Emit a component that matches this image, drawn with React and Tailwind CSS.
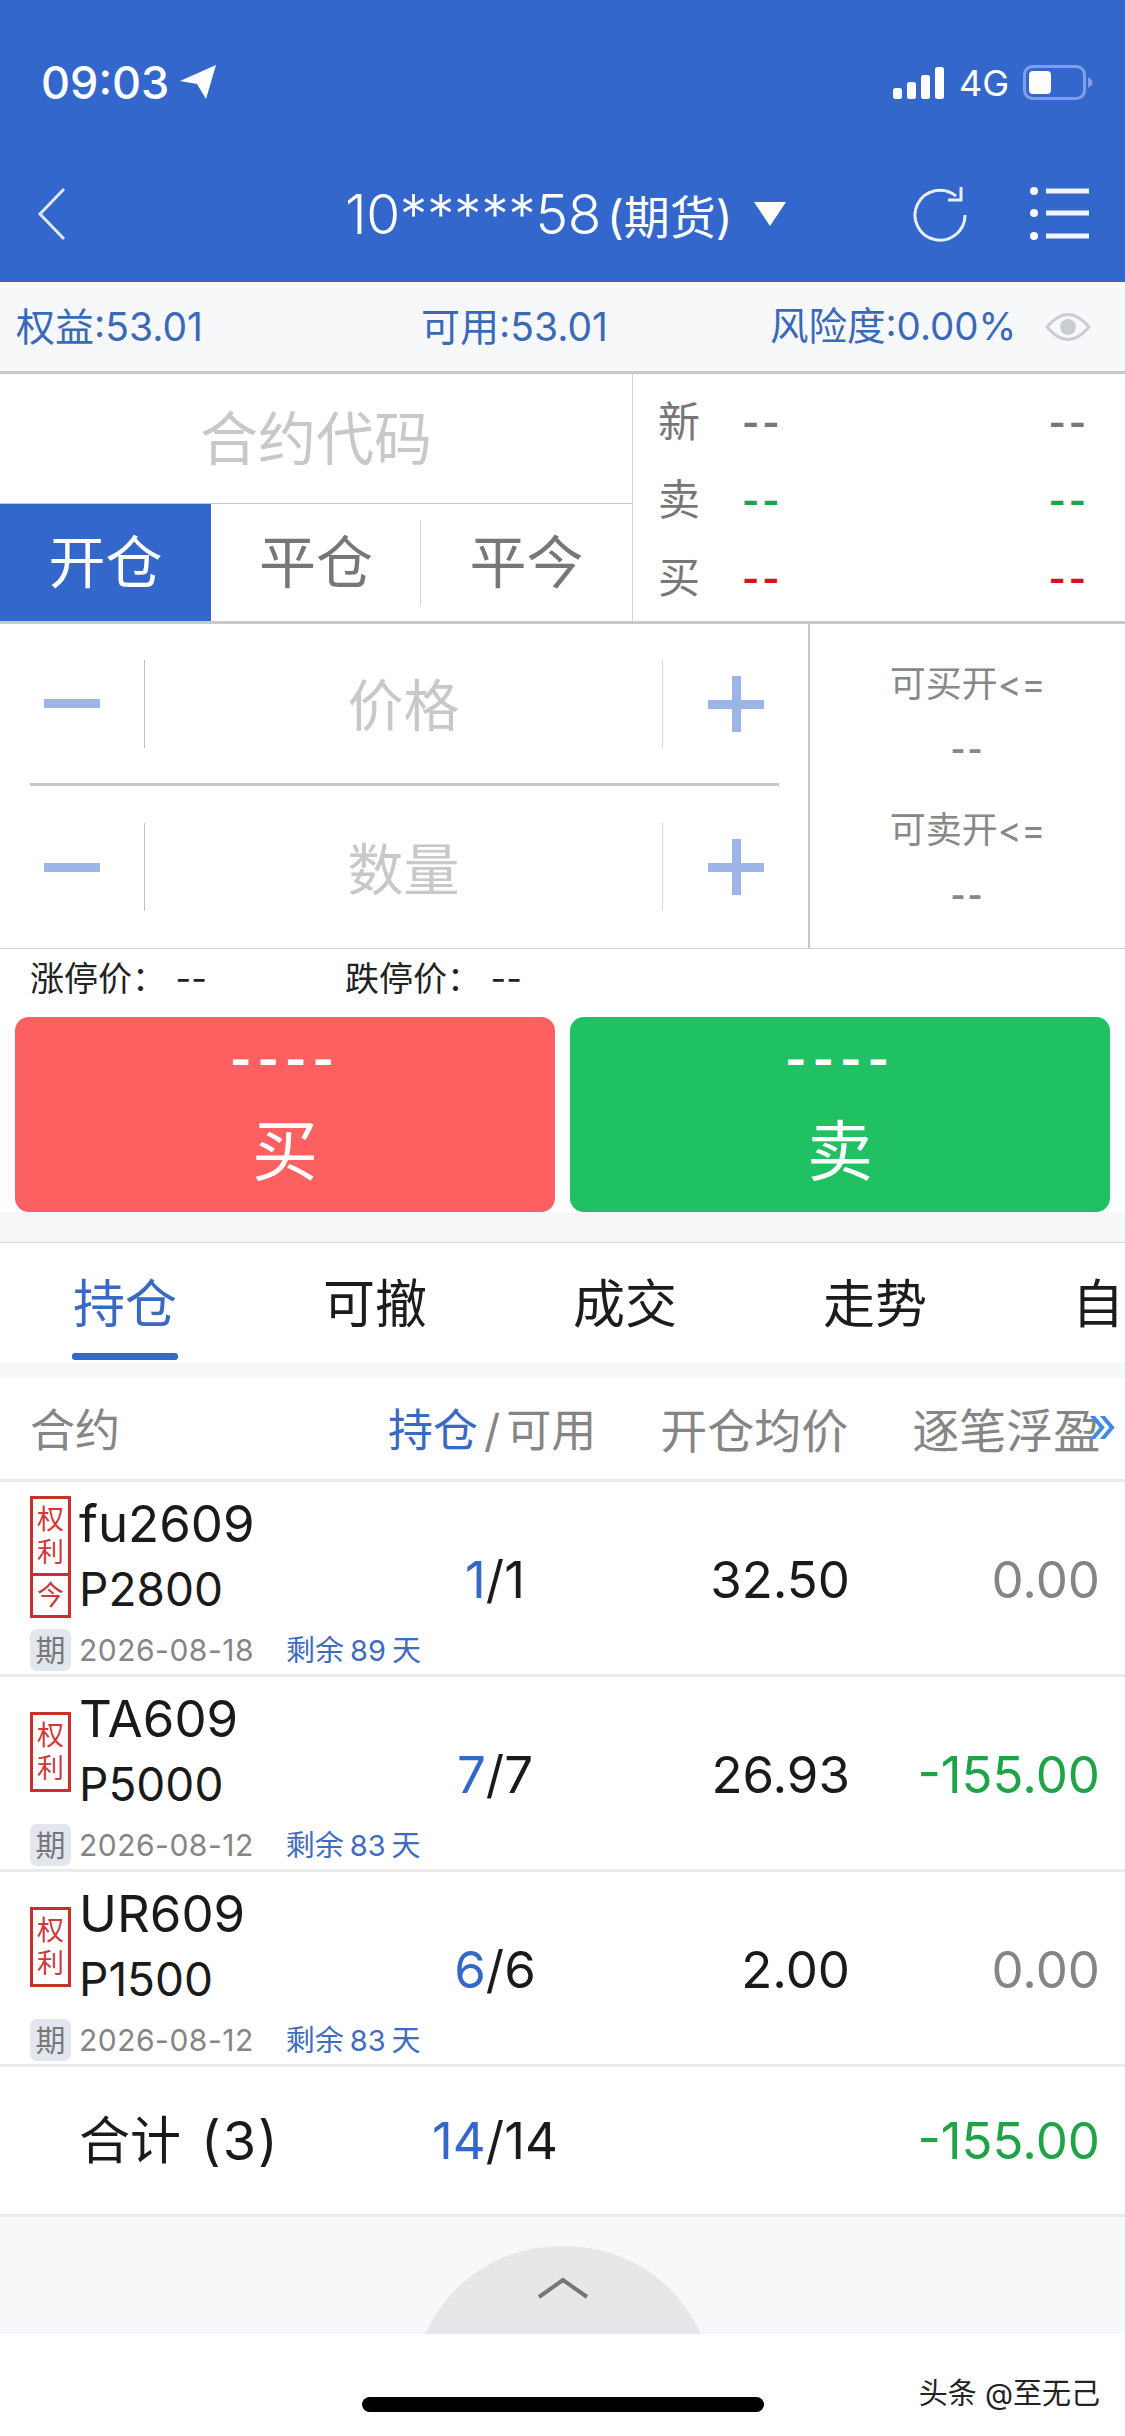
import React from "react";

const FONT = { fontFamily: 'Inter, "Noto Sans CJK SC", sans-serif' };

function LocationArrow() {
  return (
    <svg width="38" height="38" viewBox="0 0 38 38" className="shrink-0">
      <path d="M37 2 L27 36 L18 21 L1 18 Z" fill="#fff" />
    </svg>
  );
}
function Signal() {
  return (
    <svg width="52" height="33" viewBox="0 0 52 33" className="shrink-0">
      <rect x="0" y="21" width="9" height="11" rx="2.5" fill="#fff" />
      <rect x="14" y="15" width="9" height="17" rx="2.5" fill="#fff" />
      <rect x="28" y="8" width="9" height="24" rx="2.5" fill="#fff" />
      <rect x="42" y="0" width="9" height="32" rx="2.5" fill="#fff" />
    </svg>
  );
}
function Battery() {
  return (
    <svg width="70" height="36" viewBox="0 0 70 36" className="shrink-0">
      <rect x="1.5" y="1.5" width="60" height="32" rx="8" fill="none" stroke="#7e9fe8" strokeWidth="3" />
      <rect x="6" y="6" width="22" height="23" rx="4" fill="#fff" />
      <path d="M65 12 L69 15 Q70 17.5 69 20 L65 23 Z" fill="#7e9fe8" />
    </svg>
  );
}
function Back() {
  return (
    <svg width="30" height="54" viewBox="0 0 30 54" className="shrink-0">
      <path d="M27 2 L3 27 L27 52" fill="none" stroke="#fff" strokeWidth="3" opacity="0.85" />
    </svg>
  );
}
function Refresh() {
  return (
    <svg width="56" height="56" viewBox="0 0 56 56" className="shrink-0">
      <path d="M52 27 A25 25 0 1 1 43 8" fill="none" stroke="#e8eefb" strokeWidth="3" transform="translate(0 2)" />
      <path d="M48 1 L48 14 L35 14" fill="none" stroke="#e8eefb" strokeWidth="3" />
    </svg>
  );
}
function MenuIcon() {
  return (
    <svg width="60" height="56" viewBox="0 0 60 56" className="shrink-0">
      {[5, 27, 50].map((y) => (
        <g key={y}>
          <circle cx="5" cy={y} r="4" fill="#fff" />
          <rect x="17" y={y - 2.5} width="43" height="5" fill="#f1f5fd" />
        </g>
      ))}
    </svg>
  );
}
function Eye() {
  return (
    <svg width="46" height="34" viewBox="0 0 46 34" className="shrink-0">
      <path d="M2 17 Q23 -8 44 17 Q23 42 2 17 Z" fill="none" stroke="#c9ccd3" strokeWidth="3" />
      <circle cx="23" cy="17" r="8" fill="#c9ccd3" />
    </svg>
  );
}
function Minus() {
  return <span className="block w-[56px] h-[9px] bg-[#9db5e6]" />;
}
function Plus() {
  return (
    <svg width="56" height="56" viewBox="0 0 56 56" className="shrink-0">
      <rect x="0" y="24" width="56" height="9" fill="#9db5e6" />
      <rect x="24" y="0" width="9" height="56" fill="#9db5e6" />
    </svg>
  );
}

function Quote({ label, color }) {
  return (
    <div className="flex items-center h-[78px]">
      <span className="w-[84px] text-[42px] leading-none text-[#777]">{label}</span>
      <span className={`text-[37px] leading-none font-bold tracking-[3px] ${color}`}>--</span>
      <span className={`ml-auto text-[37px] leading-none font-bold tracking-[3px] ${color}`}>--</span>
    </div>
  );
}

function Stepper({ label, border }) {
  return (
    <div className={`h-[162px] flex items-center ml-[30px] mr-[29px] ${border ? "border-b-[3px] border-[#c6c6c6]" : ""}`}>
      <div className="w-[85px] flex justify-center -ml-[1px]">
        <Minus />
      </div>
      <div className="w-[1px] h-[88px] bg-[#bfbfbf] ml-[30px]" />
      <div className="w-[517px] pt-[5px] text-center text-[56px] leading-none text-[#c8c8c8]">{label}</div>
      <div className="w-[1px] h-[88px] bg-[#d8d8d8]" />
      <div className="ml-[45px]">
        <Plus />
      </div>
    </div>
  );
}

function TradeButton({ label, bg }) {
  return (
    <div className={`w-[540px] h-[195px] rounded-[14px] ${bg} flex flex-col items-center text-white`}>
      <span className="mt-[22px] h-[40px] text-[46px] leading-[40px] font-bold tracking-[6px]">----</span>
      <span className="mt-[32px] text-[66px] leading-[80px]">{label}</span>
    </div>
  );
}

function Tab({ label, active }) {
  return (
    <div className="w-[250px] shrink-0 h-[120px] flex flex-col items-center relative">
      <span className={`mt-[32px] text-[52px] leading-[60px] ${active ? "text-[#3a69c4]" : "text-[#1c1c1c]"}`}>{label}</span>
      {active && <span className="absolute top-[110px] w-[106px] h-[7px] rounded-[3px] bg-[#3367c9]" />}
    </div>
  );
}

function Row({ name, strike, today, expiry, days, pos, avg, pnl, pnlColor }) {
  return (
    <div className="h-[195px] pt-[3px] border-b-[3px] border-[#ebebeb] grid grid-cols-[430px_130px_290px_250px] items-center">
      <div className="pl-[30px] h-full flex flex-col">
        <div className="flex items-center h-[144px]">
          <div className="w-[41px] shrink-0 border-[3px] border-[#c9302c] flex flex-col items-center text-[#d0383a] text-[27px] leading-[33px]">
            <span className="py-[4px] flex flex-col items-center">
              <span>权</span>
              <span>利</span>
            </span>
            {today && <span className="w-full text-center border-t-[3px] border-[#c9302c] py-[3px]">今</span>}
          </div>
          <div className="ml-[8px] flex flex-col text-[#1a1a1a]">
            <span className="text-[51px] leading-[64px]">{name}</span>
            <span className="text-[46px] leading-[66px]">{strike}</span>
          </div>
        </div>
        <div className="flex items-center h-[42px]">
          <span className="w-[41px] h-[42px] rounded-[7px] bg-[#e3e6ee] flex items-center justify-center text-[30px] leading-none text-[#777]">期</span>
          <span className="ml-[8px] text-[30px] leading-none text-[#858585] tracking-[0.5px]">{expiry}</span>
          <span className="ml-[32px] text-[29px] leading-none text-[#3f6cbf] whitespace-nowrap flex items-center gap-[6px]">
            <span>剩余</span>
            <span>{days}</span>
            <span>天</span>
          </span>
        </div>
      </div>
      <div className="text-center text-[51px] leading-none text-[#1a1a1a] whitespace-nowrap">
        <span className="text-[#3367c9]">{pos}</span>/{pos}
      </div>
      <div className="text-right text-[51px] leading-none text-[#1a1a1a]">{avg}</div>
      <div className={`text-right text-[51px] leading-none ${pnlColor}`}>{pnl}</div>
    </div>
  );
}

export default function App() {
  return (
    <div style={FONT} className="w-[1125px] h-[2436px] bg-white overflow-hidden flex flex-col">
      {/* Blue header */}
      <div className="h-[282px] shrink-0 bg-[#3367cb] text-white flex flex-col">
        <div className="h-[165px] pt-[60px] pl-[41px] pr-[32px] flex items-start">
          <span className="text-[45px] leading-[45px] font-medium">09:03</span>
          <span className="ml-[10px] mt-[3px]">
            <LocationArrow />
          </span>
          <div className="ml-auto flex items-center gap-[14px] pt-[5px]">
            <Signal />
            <span className="text-[36px] leading-none">4G</span>
            <Battery />
          </div>
        </div>
        <div className="flex items-center h-[100px] pl-[37px] pr-[36px] -mt-[1px]">
          <Back />
          <div className="ml-[278px] flex items-baseline whitespace-nowrap">
            <span className="text-[55px] leading-none font-light tracking-[-0.4px]">10*****58</span>
            <span className="ml-[6px] text-[46px] leading-none">(期货)</span>
          </div>
          <svg width="32" height="24" viewBox="0 0 32 24" className="shrink-0 ml-[22px]">
            <path d="M0 0 H32 L16 24 Z" fill="#fff" />
          </svg>
          <div className="ml-auto flex items-center gap-[60px]">
            <Refresh />
            <MenuIcon />
          </div>
        </div>
      </div>

      {/* Account bar */}
      <div className="h-[92px] shrink-0 bg-[#f7f8fa] border-b-[3px] border-[#c9c9c9] flex items-center text-[39px] leading-none text-[#3a69b8] pl-[16px] pr-[34px] whitespace-nowrap">
        <span className="w-[405px]">权益:53.01</span>
        <span className="w-[349px]">可用:53.01</span>
        <span className="text-[38.5px]">风险度:0.00%</span>
        <span className="ml-auto">
          <Eye />
        </span>
      </div>

      {/* Contract + quotes */}
      <div className="h-[250px] shrink-0 flex border-b-[3px] border-[#c9c9c9]">
        <div className="w-[633px] shrink-0 flex flex-col border-r border-[#d6d6d6]">
          <div className="h-[130px] border-b border-[#c9c9c9] flex items-center justify-center text-[58px] leading-none text-[#c8c8c8]">
            合约代码
          </div>
          <div className="flex-1 flex text-[57px] leading-none text-[#777]">
            <div className="w-[211px] bg-[#3367cb] text-white flex items-center justify-center">开仓</div>
            <div className="w-[210px] flex items-center justify-center relative">
              平仓
              <span className="absolute right-0 top-[16px] bottom-[16px] w-[1px] bg-[#d4d4d4]" />
            </div>
            <div className="flex-1 flex items-center justify-center">平今</div>
          </div>
        </div>
        <div className="flex-1 pl-[25px] pr-[36px] pt-[9px]">
          <Quote label="新" color="text-[#777]" />
          <Quote label="卖" color="text-[#1fa347]" />
          <Quote label="买" color="text-[#d4141c]" />
        </div>
      </div>

      {/* Steppers */}
      <div className="h-[325px] shrink-0 flex border-b border-[#cfcfcf]">
        <div className="w-[810px] shrink-0 border-r-[2px] border-[#c9c9c9] flex flex-col">
          <Stepper label="价格" border />
          <Stepper label="数量" />
        </div>
        <div className="flex-1 flex flex-col items-center text-[#888]">
          <span className="mt-[40px] text-[36px] leading-[40px]">可买开&lt;=</span>
          <span className="mt-[26px] text-[32px] leading-[40px] font-bold tracking-[2px]">--</span>
          <span className="mt-[40px] text-[36px] leading-[40px]">可卖开&lt;=</span>
          <span className="mt-[26px] text-[32px] leading-[40px] font-bold tracking-[2px]">--</span>
        </div>
      </div>

      {/* Limit prices */}
      <div className="h-[68px] shrink-0 flex items-center text-[34px] leading-none text-[#222] pl-[30px] pb-[9px] whitespace-nowrap">
        <span className="w-[315px]">涨停价： --</span>
        <span>跌停价： --</span>
      </div>

      {/* Buy / Sell */}
      <div className="shrink-0 flex gap-[15px] px-[15px]">
        <TradeButton label="买" bg="bg-[#fc6060]" />
        <TradeButton label="卖" bg="bg-[#1fc162]" />
      </div>

      {/* Gap */}
      <div className="h-[31px] shrink-0 bg-[#f6f7f9] border-b border-[#d6d6d6]" />

      {/* Tabs */}
      <div className="shrink-0 flex overflow-hidden">
        <Tab label="持仓" active />
        <Tab label="可撤" />
        <Tab label="成交" />
        <Tab label="走势" />
        <div className="w-[125px] shrink-0 h-[120px] pl-[72px]">
          <span className="block mt-[32px] text-[52px] leading-[60px] text-[#1c1c1c]">自</span>
        </div>
      </div>
      <div className="h-[15px] shrink-0 bg-[#f6f7f9]" />

      {/* Table header */}
      <div className="h-[104px] pt-[4px] shrink-0 border-b-[3px] border-[#ebebeb] flex items-center text-[45px] leading-none text-[#858585] pl-[30px] whitespace-nowrap relative">
        <span className="w-[358px]">合约</span>
        <span className="text-[#3a69c4]">持仓</span>
        <span className="ml-[6px]">/</span>
        <span className="ml-[6px]">可用</span>
        <span className="ml-[64px] text-[47px]">开仓均价</span>
        <span className="ml-[64px] text-[47px]">逐笔浮盈</span>
        <span className="absolute left-[1088px] top-[22px] text-[50px] leading-none text-[#3f8ae8]">»</span>
      </div>

      <Row name="fu2609" strike="P2800" today expiry="2026-08-18" days="89" pos="1" avg="32.50" pnl="0.00" pnlColor="text-[#858585]" />
      <Row name="TA609" strike="P5000" expiry="2026-08-12" days="83" pos="7" avg="26.93" pnl="-155.00" pnlColor="text-[#1fa347]" />
      <Row name="UR609" strike="P1500" expiry="2026-08-12" days="83" pos="6" avg="2.00" pnl="0.00" pnlColor="text-[#858585]" />

      {/* Total */}
      <div className="h-[150px] shrink-0 border-b-[3px] border-[#ebebeb] grid grid-cols-[430px_130px_290px_250px] items-center text-[51px] leading-none text-[#1a1a1a]">
        <span className="pl-[79px] whitespace-nowrap flex items-center">
          <span>合计</span>
          <span className="ml-[20px] text-[54px] tracking-[2px]">(3)</span>
        </span>
        <span className="text-center whitespace-nowrap">
          <span className="text-[#3367c9]">14</span>/14
        </span>
        <span />
        <span className="text-right text-[#1fa347]">-155.00</span>
      </div>

      {/* Collapsed drawer */}
      <div className="h-[117px] shrink-0 bg-[#f7f8fa] flex justify-center items-end">
        <svg width="276" height="88" viewBox="0 0 276 88">
          <path d="M0 88 C30 25 85 0 138 0 C191 0 246 25 276 88 Z" fill="#e6e7e9" />
          <path d="M114 51 L138 34 L162 51" fill="none" stroke="#777" strokeWidth="4" />
        </svg>
      </div>

      {/* Home indicator */}
      <div className="flex-1 relative flex justify-center pt-[63px]">
        <span className="block w-[402px] h-[15px] rounded-full bg-black" />
        <span className="absolute right-[25px] top-[45px] text-[29px] leading-none text-[#222] whitespace-nowrap">头条 @至无己</span>
      </div>
    </div>
  );
}
